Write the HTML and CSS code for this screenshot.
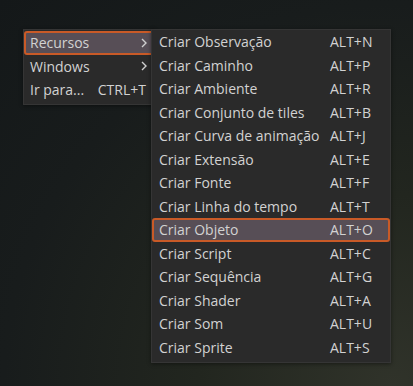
FILE: index.html
```html
<!DOCTYPE html>
<html lang="pt-br">
<head>
  <meta charset="UTF-8" />
  <title>Menu Recursos</title>
  <link rel="stylesheet" href="styles.css">
</head>
<body>
  <div class="desktop">
    <div class="menu principal">
      <div class="item ativo">
        <span class="rotulo">Recursos</span>
        <svg class="seta" width="6" height="10" viewBox="0 0 6 10"><polyline points="1,1 5,5 1,9" fill="none" stroke="#cfcfcf" stroke-width="1.4"/></svg>
      </div>
      <div class="item">
        <span class="rotulo">Windows</span>
        <svg class="seta" width="6" height="10" viewBox="0 0 6 10"><polyline points="1,1 5,5 1,9" fill="none" stroke="#cfcfcf" stroke-width="1.4"/></svg>
      </div>
      <div class="item">
        <span class="rotulo">Ir para...</span>
        <span class="atalho-curto">CTRL+T</span>
      </div>
    </div>

    <div class="menu submenu">
      <div class="item"><span class="rotulo">Criar Observação</span><span class="atalho">ALT+N</span></div>
      <div class="item"><span class="rotulo">Criar Caminho</span><span class="atalho">ALT+P</span></div>
      <div class="item"><span class="rotulo">Criar Ambiente</span><span class="atalho">ALT+R</span></div>
      <div class="item"><span class="rotulo">Criar Conjunto de tiles</span><span class="atalho">ALT+B</span></div>
      <div class="item"><span class="rotulo">Criar Curva de animação</span><span class="atalho">ALT+J</span></div>
      <div class="item"><span class="rotulo">Criar Extensão</span><span class="atalho">ALT+E</span></div>
      <div class="item"><span class="rotulo">Criar Fonte</span><span class="atalho">ALT+F</span></div>
      <div class="item"><span class="rotulo">Criar Linha do tempo</span><span class="atalho">ALT+T</span></div>
      <div class="item ativo"><span class="rotulo">Criar Objeto</span><span class="atalho">ALT+O</span></div>
      <div class="item"><span class="rotulo">Criar Script</span><span class="atalho">ALT+C</span></div>
      <div class="item"><span class="rotulo">Criar Sequência</span><span class="atalho">ALT+G</span></div>
      <div class="item"><span class="rotulo">Criar Shader</span><span class="atalho">ALT+A</span></div>
      <div class="item"><span class="rotulo">Criar Som</span><span class="atalho">ALT+U</span></div>
      <div class="item"><span class="rotulo">Criar Sprite</span><span class="atalho">ALT+S</span></div>
    </div>
  </div>
</body>
</html>
```

FILE: styles.css
```css
html, body {
  height: 100%;
  margin: 0;
  padding: 0;
  font-family: "Open Sans", "Noto Sans", sans-serif;
}

body {
  background: radial-gradient(ellipse at 95% 100%, #30332a 0%, #22261f 35%, #181c1c 70%, #141819 100%);
  overflow: hidden;
}

.desktop {
  display: flex;
  align-items: flex-start;
  padding: 29px 0 0 23px;
}

.menu {
  background-color: #2a2a2a;
  border: 1px solid #353535;
  box-shadow: 0 1px 4px rgba(0, 0, 0, 0.45);
  padding: 1px 0 2px;
  display: flex;
  flex-direction: column;
  color: #d2d2d2;
  font-size: 14px;
}

.principal {
  width: 130px;
}

.submenu {
  width: 238px;
  margin-left: -4px;
  padding: 0 0 3px;
}

.item {
  display: flex;
  align-items: center;
  height: 23.5px;
  box-sizing: border-box;
  padding: 0 12px 0 5px;
  border: 2px solid transparent;
  border-radius: 3px;
  white-space: nowrap;
}

.principal .item {
  padding: 0 4px;
}

.item.ativo {
  background-color: #574e56;
  border-color: #c95a27;
}

.rotulo {
  flex: 1;
}

.atalho {
  width: 46px;
}

.atalho-curto {
  margin-right: 2px;
}

.seta {
  margin-right: 1px;
}
```
